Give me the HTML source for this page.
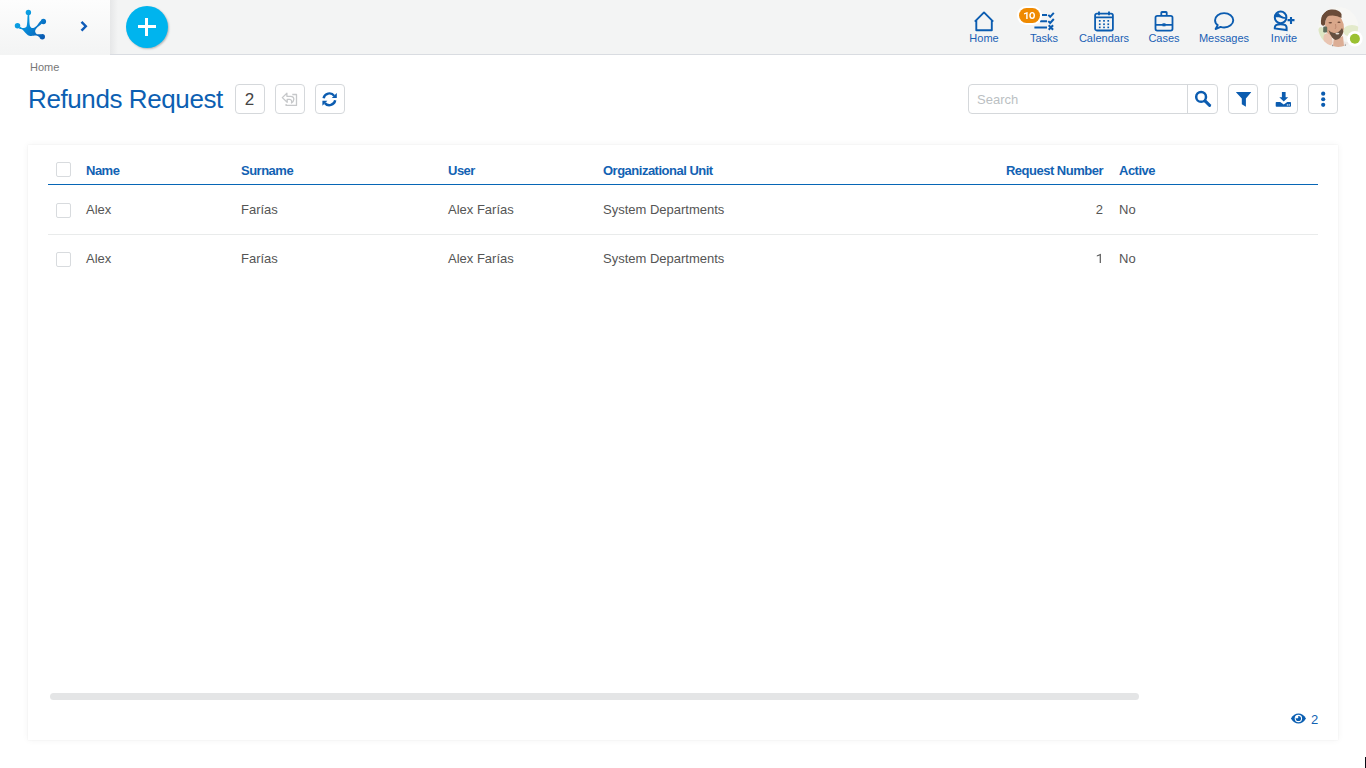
<!DOCTYPE html>
<html><head><meta charset="utf-8">
<style>
*{margin:0;padding:0;box-sizing:border-box}
html,body{width:1366px;height:768px;overflow:hidden;background:#fff;font-family:"Liberation Sans",sans-serif;position:relative}
.abs{position:absolute}
#hdr{position:absolute;left:0;top:0;width:1366px;height:55px;background:#f3f4f4}
#hdr .line{position:absolute;left:110px;top:54px;width:1256px;height:1px;background:#d9dce1}
#logoarea{position:absolute;left:0;top:0;width:110px;height:55px;background:linear-gradient(#fdfdfd,#f3f4f4)}
#shadowL{position:absolute;left:110px;top:0;width:8px;height:54px;background:linear-gradient(90deg,#e6e7e8,#f3f4f4)}
#plus{position:absolute;left:126px;top:6px;width:42px;height:42px;border-radius:50%;background:#00b4ee;box-shadow:1px 1px 2px rgba(0,0,0,.25)}
#plus:before{content:"";position:absolute;left:12px;top:19px;width:18px;height:3px;background:#fff}
#plus:after{content:"";position:absolute;left:19.2px;top:11.5px;width:3px;height:18px;background:#fff}
.nav{position:absolute;top:0;width:60px;height:54px;text-align:center;color:#1a5fb4;font-size:11px}
.nav svg{position:absolute;left:20px;top:11px;overflow:visible}
.nav span{position:absolute;left:0;width:60px;top:32px;line-height:12px}
.bx{position:absolute;top:84px;width:30px;height:30px;border:1px solid #d5d8db;border-radius:4px;background:#fff}
.th{position:absolute;top:164px;font-size:13px;font-weight:bold;color:#1262b3;letter-spacing:-0.5px;line-height:14px}
.td{position:absolute;font-size:13px;color:#555;line-height:14px}
.cb{position:absolute;left:56px;width:15px;height:15px;border:1px solid #d8dbde;border-radius:2px;background:#fff}
</style></head><body>
<div id="hdr">
  <div id="logoarea"></div>
  <div id="shadowL"></div>
  <div class="line"></div>
  <!-- logo -->
  <svg class="abs" style="left:0;top:0" width="60" height="55" viewBox="0 0 60 55">
    <defs><linearGradient id="lg" gradientUnits="userSpaceOnUse" x1="16" y1="14" x2="44" y2="38"><stop offset="0" stop-color="#0eaeea"/><stop offset="0.5" stop-color="#0788d6"/><stop offset="1" stop-color="#0a58b0"/></linearGradient></defs>
    <g fill="url(#lg)">
      <circle cx="28.4" cy="12.4" r="2.7"/>
      <circle cx="17.5" cy="25.7" r="2.75"/>
      <circle cx="43.4" cy="21.5" r="2.65"/>
      <circle cx="42.3" cy="36.8" r="2.7"/>
      <path d="M27.72 14.64 C27.39 15.75 27.46 19.37 27.28 21.29 C27.09 23.21 27.02 25.09 26.61 26.16 C26.21 27.23 25.58 27.41 24.84 27.71 C24.11 28.00 23.00 28.08 22.19 27.93 C21.37 27.78 20.45 26.67 19.97 26.82 C19.49 26.97 18.86 28.34 19.31 28.81 C19.75 29.29 21.63 29.04 22.63 29.70 C23.63 30.36 24.40 31.88 25.29 32.80 C26.17 33.72 26.98 34.71 27.94 35.24 C28.90 35.77 29.57 35.92 31.04 35.99 C32.52 36.06 35.25 35.44 36.80 35.68 C38.35 35.92 39.64 37.64 40.34 37.45 C41.04 37.27 41.56 35.13 41.01 34.57 C40.45 34.02 37.98 34.57 37.02 34.13 C36.06 33.69 35.51 32.65 35.25 31.91 C34.99 31.18 35.07 30.51 35.47 29.70 C35.88 28.89 36.62 28.08 37.69 27.04 C38.76 26.01 41.41 24.50 41.89 23.50 C42.37 22.50 41.41 20.70 40.57 21.06 C39.72 21.43 38.02 24.57 36.80 25.71 C35.58 26.86 34.22 27.63 33.26 27.93 C32.30 28.22 31.63 28.00 31.04 27.49 C30.45 26.97 30.01 26.60 29.71 24.83 C29.42 23.06 29.35 18.56 29.27 16.86 C29.20 15.16 29.53 15.01 29.27 14.64 C29.01 14.27 28.05 13.54 27.72 14.64Z"/>
    </g>
  </svg>
  <svg class="abs" style="left:77.5px;top:19px" width="12" height="14" viewBox="0 0 12 14"><path d="M2.6 3.7 L4.4 1.9 L9.5 7.25 L4.4 12.6 L2.6 10.8 L6.2 7.25Z" fill="#0e5bb8"/></svg>
  <div id="plus"></div>

  <div class="nav" style="left:954px">
    <svg width="20" height="21" viewBox="0 0 20 21"><path d="M0.8 10.6 L10 1.4 L19.2 10.6 M2.3 9.2 V19.2 H17.8 V9.2" fill="none" stroke="#0b5cb0" stroke-width="1.9" stroke-linejoin="round"/></svg>
    <span>Home</span>
  </div>
  <div class="nav" style="left:1014px">
    <svg width="22" height="21" viewBox="0 0 22 21" style="left:19px"><g stroke="#0b5cb0" stroke-width="2" fill="none"><path d="M9 4h5 M7.1 10.3h6.9 M1.4 16.5h12.6"/><path d="M15.3 3.9l1.9 1.9 3.6-4 M15.3 10.1l1.9 1.9 3.6-4 M15.7 14.3l4.4 4.4 M20.1 14.3l-4.4 4.4"/></g></svg>
    <span>Tasks</span>
  </div>
  <div class="abs" style="left:1017.3px;top:6.3px;width:24.4px;height:18.4px;border-radius:9.2px;background:#fff"></div>
  <div class="abs" style="left:1019px;top:8px;width:21px;height:15px;border-radius:7.5px;background:#ef8a00"></div>
  <svg class="abs" style="left:1023px;top:11px" width="14" height="10" viewBox="0 0 14 10"><path d="M4.6 1 V8 H3.2 V2.7 L1 3.5 V2.3 L4.4 1Z" fill="#fff"/><ellipse cx="9.15" cy="4.5" rx="2.15" ry="2.85" fill="none" stroke="#fff" stroke-width="1.4"/></svg>
  <div class="nav" style="left:1074px">
    <svg width="20" height="21" viewBox="0 0 20 21"><g fill="none" stroke="#0b5cb0" stroke-width="1.8"><rect x="1.1" y="2.6" width="17.8" height="16.9" rx="1.8"/><path d="M1 6.4h18 M5 0.6v3.6 M15 0.6v3.6"/></g><g fill="#0b5cb0"><rect x="4.9" y="9" width="1.7" height="1.7"/><rect x="9.15" y="9" width="1.7" height="1.7"/><rect x="13.4" y="9" width="1.7" height="1.7"/><rect x="4.9" y="12.4" width="1.7" height="1.7"/><rect x="9.15" y="12.4" width="1.7" height="1.7"/><rect x="13.4" y="12.4" width="1.7" height="1.7"/><rect x="4.9" y="15.6" width="1.7" height="1.6"/><rect x="9.15" y="15.6" width="1.7" height="1.6"/><rect x="13.4" y="15.6" width="1.7" height="1.6"/></g></svg>
    <span>Calendars</span>
  </div>
  <div class="nav" style="left:1134px">
    <svg width="20" height="21" viewBox="0 0 20 21"><g fill="none" stroke="#0b5cb0" stroke-width="1.8"><rect x="1.5" y="4.8" width="17" height="14.8" rx="1.8"/><path d="M7.3 4.8V1.6Q7.3 1 8 1H12Q12.7 1 12.7 1.6V4.8 M1.5 13.8h17"/></g><rect x="8.5" y="12.3" width="3" height="3" fill="#0b5cb0"/></svg>
    <span>Cases</span>
  </div>
  <div class="nav" style="left:1194px">
    <svg width="20" height="21" viewBox="0 0 20 21"><path d="M10.15 2.15 C15.2 2.15 19.25 5.35 19.25 9.3 C19.25 13.25 15.2 16.45 10.15 16.45 C8.9 16.45 7.7 16.25 6.6 15.9 L1.6 18 L3.7 14.1 C1.9 12.9 1.05 11.2 1.05 9.3 C1.05 5.35 5.1 2.15 10.15 2.15Z" fill="none" stroke="#0b5cb0" stroke-width="1.9" stroke-linejoin="round"/></svg>
    <span>Messages</span>
  </div>
  <div class="nav" style="left:1254px">
    <svg width="22" height="21" viewBox="0 0 22 21" style="left:19px"><g fill="none" stroke="#0b5cb0" stroke-width="2"><circle cx="7.6" cy="6.4" r="5.8"/><path d="M1.8 17.5 V16.6 C1.8 14.4 4.5 13.3 7.7 13.3 C10.9 13.3 13.6 14.4 13.6 16.6 V19.1 Z"/></g><path d="M5.4 2 Q7 4 8.7 4.9 Q11 6 12.9 6.3 L12.9 7.8 Q11 7.7 9.4 7.4 Q7.5 6.6 5.8 6.3 Q3.5 6 2.1 6.3 L2.5 3.4 Z" fill="#0b5cb0"/><path d="M18 6v6.9 M14.5 9.1h7" stroke="#0b5cb0" stroke-width="2.1"/></svg>
    <span>Invite</span>
  </div>
  <!-- avatar -->
  <svg class="abs" style="left:1314px;top:4px" width="52" height="48" viewBox="0 0 52 48">
    <defs>
      <clipPath id="av"><circle cx="24.2" cy="23.1" r="20"/></clipPath>
      <filter id="bl" x="-10%" y="-10%" width="120%" height="120%"><feGaussianBlur stdDeviation="0.6"/></filter>
    </defs>
    <g clip-path="url(#av)">
      <rect width="52" height="48" fill="#f6f6f3"/>
      <g filter="url(#bl)">
      <rect x="26" y="0" width="26" height="22" fill="#f7f7f5"/>
      <ellipse cx="38" cy="27" rx="9" ry="6" fill="#e3eacb"/>
      <ellipse cx="7" cy="31" rx="4" ry="8" fill="#dde6c4"/>
      <path d="M15 38 Q24 36 34 38 L36 48 H12z" fill="#efe9e6"/>
      <path d="M18.5 40 L20 46 H17.5z M31 39.5 L33 45 L30.5 46z" fill="#666"/>
      <path d="M20 32 Q24 35 29 32 L30 42 Q24 44 19 42z" fill="#dcae96"/>
      <ellipse cx="20.5" cy="22" rx="9.3" ry="13" transform="rotate(-12 20.5 22)" fill="#d9a78a"/>
      <path d="M7 20 Q6 7 17 5.5 Q25 5 27.5 10 L27.5 14 Q22 10.5 15 11.8 Q11.5 13 10.8 21 Q8.5 23 7 20z" fill="#6a4b37"/>
      <ellipse cx="16.3" cy="18.8" rx="1.8" ry="0.8" fill="#6b4838"/>
      <ellipse cx="25" cy="18.3" rx="1.6" ry="0.8" fill="#6b4838"/>
      <path d="M21.5 20 Q22.5 24 21 25" stroke="#b9826a" stroke-width="0.8" fill="none"/>
      <path d="M14.5 26 Q17 34 21.5 36 Q27 35.5 29.3 28 Q29 25 28 24 Q24.5 29.5 20 29 Q16.5 28.5 14.5 26z" fill="#65503f"/>
      <ellipse cx="23.4" cy="29.6" rx="2" ry="0.9" fill="#e6dcd4"/>
      <ellipse cx="14" cy="35.5" rx="4.3" ry="6.5" transform="rotate(-20 14 35.5)" fill="#e9c5b2"/>
      <rect x="9.2" y="22.5" width="4" height="6" rx="1.2" fill="#5f6d5c"/>
      </g>
    </g>
    <circle cx="40.9" cy="34.7" r="7.8" fill="#fff"/>
    <circle cx="40.9" cy="34.7" r="5" fill="#9bc132"/>
  </svg>
</div>

<div class="abs" style="left:30px;top:61px;font-size:11px;color:#777;line-height:12px">Home</div>
<div class="abs" style="left:28px;top:84px;font-size:26px;color:#0c5fb2;letter-spacing:-0.4px;line-height:30px">Refunds Request</div>

<div class="bx" style="left:235px"><div style="position:absolute;left:-1.5px;top:0.5px;width:30px;line-height:28px;text-align:center;font-size:17px;color:#444">2</div></div>
<div class="bx" style="left:275px">
  <svg class="abs" style="left:-1px;top:-1px" width="30" height="30" viewBox="0 0 30 30"><g fill="none" stroke="#c6c8ca" stroke-width="1.3" stroke-linejoin="round"><path d="M7.3 13.6 L11.9 9.2 V12.3 H15.5 C18 12.3 19 13.8 18.8 15.5 C18.6 17.2 17.8 18.3 16.5 19 C16.9 17.5 16.9 15.4 14.5 15.4 H12.2 V18.3 Z"/><path d="M17.3 10.5 H21.5 V21.4 H11.1 V20.1"/></g></svg>
</div>
<div class="bx" style="left:315px">
  <svg class="abs" style="left:-1px;top:-1px" width="30" height="30" viewBox="0 0 30 30"><g fill="none" stroke="#0b5cb0" stroke-width="2.4"><path d="M8.6 14.3 A5.9 5.9 0 0 1 19.2 11.9"/><path d="M20.2 16.3 A5.9 5.9 0 0 1 9.9 19.1"/></g><path d="M21.8 8.9 V13.9 H16.8z M7.4 16.7 V21.7 L12.4 16.7z" fill="#0b5cb0"/></svg>
</div>

<!-- search -->
<div class="abs" style="left:968px;top:84px;width:250px;height:30px;border:1px solid #d5d8db;border-radius:4px;background:#fff"></div>
<div class="abs" style="left:1187px;top:84px;width:1px;height:30px;background:#d5d8db"></div>
<div class="abs" style="left:977px;top:92px;font-size:13px;color:#bbbfc3;line-height:15px">Search</div>
<svg class="abs" style="left:1188px;top:84px" width="30" height="30" viewBox="0 0 30 30"><circle cx="13.1" cy="12.9" r="4.9" fill="none" stroke="#0b5cb0" stroke-width="2.5"/><path d="M17.3 17.1 L21.6 21.4" stroke="#0b5cb0" stroke-width="3" stroke-linecap="round"/></svg>
<div class="bx" style="left:1228px">
  <svg class="abs" style="left:-1px;top:-1px" width="30" height="30" viewBox="0 0 30 30"><path d="M8 8.2 Q8 8 8.3 8 H22.9 Q23.2 8 23.2 8.2 L17.9 14.6 V22.8 L13.8 20.3 V14.6 Z" fill="#0b5cb0"/></svg>
</div>
<div class="bx" style="left:1268px">
  <svg class="abs" style="left:-1px;top:-1px" width="30" height="30" viewBox="0 0 30 30"><path d="M13.9 8 H17.6 V13.2 H20.2 L15.75 17.6 L11.3 13.2 H13.9z" fill="#0b5cb0"/><path d="M8.5 18 H12.2 L15.75 20.6 L19.3 18 H22.2 Q23 18 23 18.8 V22 Q23 22.8 22.2 22.8 H8.5 Q7.7 22.8 7.7 22 V18.8 Q7.7 18 8.5 18z" fill="#0b5cb0"/><rect x="18.8" y="20.4" width="1.3" height="1.1" fill="#fff"/><rect x="20.6" y="20.4" width="1.3" height="1.1" fill="#fff"/></svg>
</div>
<div class="bx" style="left:1308px">
  <svg class="abs" style="left:-1px;top:-1px" width="30" height="30" viewBox="0 0 30 30"><g fill="#0b5cb0"><circle cx="15.2" cy="9.7" r="2.1"/><circle cx="15.2" cy="15.25" r="2.1"/><circle cx="15.2" cy="20.8" r="2.1"/></g></svg>
</div>

<!-- card -->
<div class="abs" style="left:28px;top:145px;width:1310px;height:595px;background:#fff;box-shadow:0 0 1.5px rgba(0,0,0,.07),0 0 7px rgba(0,0,0,.05)"></div>
<div class="cb" style="top:162px"></div>
<div class="th" style="left:86px">Name</div>
<div class="th" style="left:241px">Surname</div>
<div class="th" style="left:448px">User</div>
<div class="th" style="left:603px">Organizational Unit</div>
<div class="th" style="left:903px;width:200px;text-align:right">Request Number</div>
<div class="th" style="left:1119px">Active</div>
<div class="abs" style="left:48px;top:184px;width:1270px;height:1px;background:#0766b6"></div>

<div class="cb" style="top:203px"></div>
<div class="td" style="left:86px;top:203px">Alex</div>
<div class="td" style="left:241px;top:203px">Farías</div>
<div class="td" style="left:448px;top:203px">Alex Farías</div>
<div class="td" style="left:603px;top:203px">System Departments</div>
<div class="td" style="left:903px;top:203px;width:200px;text-align:right">2</div>
<div class="td" style="left:1119px;top:203px">No</div>
<div class="abs" style="left:48px;top:234px;width:1270px;height:1px;background:#e9ebeb"></div>

<div class="cb" style="top:252px"></div>
<div class="td" style="left:86px;top:252px">Alex</div>
<div class="td" style="left:241px;top:252px">Farías</div>
<div class="td" style="left:448px;top:252px">Alex Farías</div>
<div class="td" style="left:603px;top:252px">System Departments</div>
<svg class="abs" style="left:1096px;top:253px" width="6" height="11" viewBox="0 0 6 11"><path d="M4.9 0.8 V9.9 H3.7 V2.6 L0.8 3.5 V2.5 L4.7 0.8 Z" fill="#5a5a5a"/></svg>
<div class="td" style="left:1119px;top:252px">No</div>

<div class="abs" style="left:50px;top:693px;width:1089px;height:7px;border-radius:3.5px;background:#e4e5e6"></div>
<svg class="abs" style="left:1290px;top:712px" width="17" height="13" viewBox="0 0 17 13"><path d="M0.9 6.5 Q4 1.5 8.45 1.5 Q13 1.5 16 6.5 Q13 11.5 8.45 11.5 Q4 11.5 0.9 6.5z" fill="#0b5fb2"/><circle cx="8.4" cy="6.5" r="3.7" fill="#fff"/><circle cx="8.4" cy="6.5" r="2.6" fill="#0b5fb2"/><circle cx="7.0" cy="5.1" r="1.4" fill="#fff"/></svg>
<div class="abs" style="left:1311px;top:713px;font-size:13px;color:#1262b3;line-height:13px">2</div>
<div class="abs" style="left:1365px;top:757px;width:1px;height:11px;background:#0a0a14"></div>
</body></html>
